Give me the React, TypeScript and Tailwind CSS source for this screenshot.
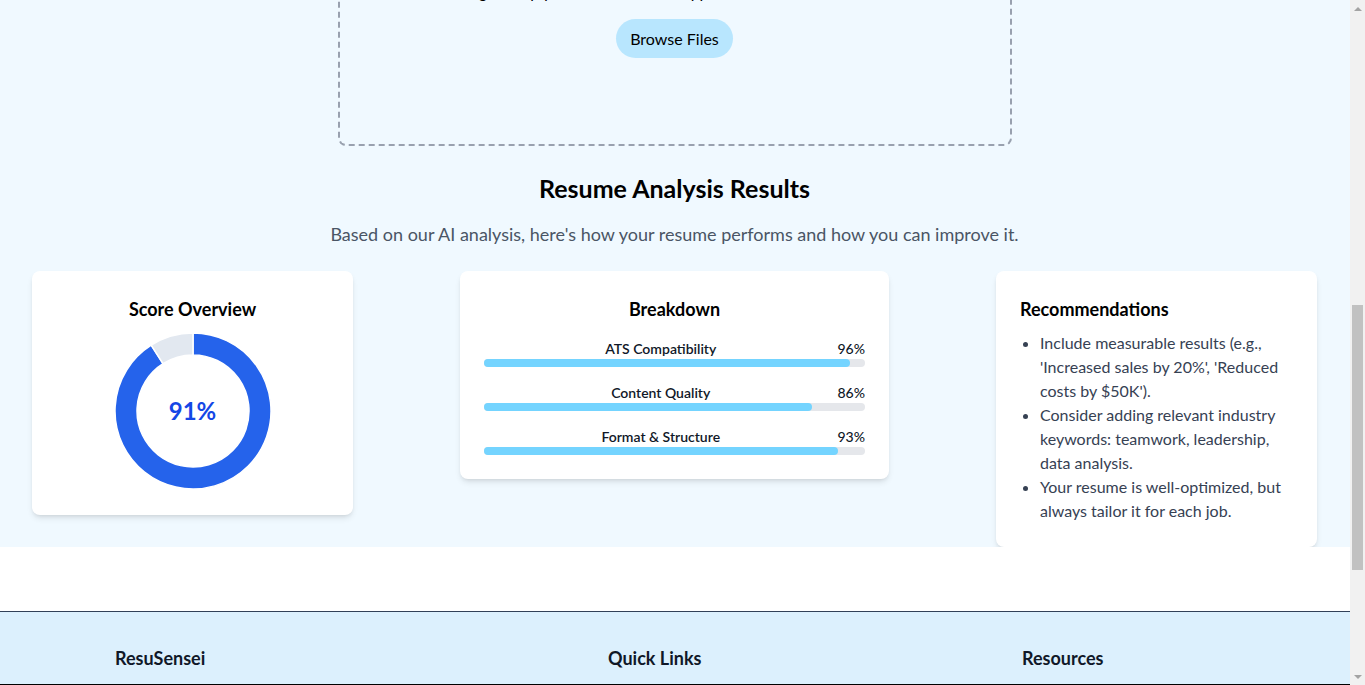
import React from "react"

const font = { fontFamily: '"Lato", "Open Sans", sans-serif' }

const breakdown = [
  { label: "ATS Compatibility", value: 96 },
  { label: "Content Quality", value: 86 },
  { label: "Format & Structure", value: 93 },
]

const recommendations = [
  "Include measurable results (e.g., 'Increased sales by 20%', 'Reduced costs by $50K').",
  "Consider adding relevant industry keywords: teamwork, leadership, data analysis.",
  "Your resume is well-optimized, but always tailor it for each job.",
]

function Donut() {
  return (
    <div className="relative w-[160px] h-[160px] mx-auto">
      <svg width="160" height="160" viewBox="0 0 160 160">
        <path
          d="M80 2 A78 78 0 1 1 38.21 14.14 L50 32.72 A56 56 0 1 0 80 24 Z"
          fill="#2563eb"
          stroke="#ffffff"
          strokeWidth="1.5"
        />
        <path
          d="M38.21 14.14 A78 78 0 0 1 80 2 L80 24 A56 56 0 0 0 50 32.72 Z"
          fill="#e2e8f0"
          stroke="#ffffff"
          strokeWidth="1.5"
        />
      </svg>
      <div className="absolute inset-0 flex items-center justify-center">
        <span className="text-2xl font-bold text-blue-700">91%</span>
      </div>
    </div>
  )
}

function Scrollbar() {
  return (
    <div className="w-[15px] shrink-0 bg-[#f1f1f1] flex flex-col items-center">
      <div className="h-[17px] flex items-center justify-center">
        <div className="w-0 h-0 border-l-[4px] border-r-[4px] border-b-[4px] border-l-transparent border-r-transparent border-b-[#a3a3a3]" />
      </div>
      <div className="h-[288px]" />
      <div className="h-[265px] w-[11px] bg-[#c1c1c1]" />
      <div className="flex-1" />
      <div className="h-[17px] flex items-center justify-center">
        <div className="w-0 h-0 border-l-[4px] border-r-[4px] border-t-[4px] border-l-transparent border-r-transparent border-t-[#a3a3a3]" />
      </div>
    </div>
  )
}

export default function App() {
  return (
    <div className="flex h-[685px] overflow-hidden bg-white" style={font}>
      <div className="flex-1 min-w-0 flex flex-col">
        {/* Upload + results */}
        <section className="bg-sky-50 pl-8 pr-[33px]">
          <div className="mx-auto w-[674px] mt-[-60px] pt-[38px] pb-[86px] border-2 border-dashed border-gray-400 rounded-lg flex flex-col items-center">
            <p className="text-base leading-6 text-black mb-[15px]">
              Drag &amp; drop your resume here. Supported formats: PDF, DOCX
            </p>
            <button className="h-[39px] bg-sky-200 text-black text-base leading-6 px-[14px] rounded-full">
              Browse Files
            </button>
          </div>

          <h2 className="mt-[26px] text-[25px] leading-8 font-bold text-black text-center">
            Resume Analysis Results
          </h2>
          <p className="mt-4 text-lg leading-7 text-gray-600 text-center">
            Based on our AI analysis, here's how your resume performs and how you can improve it.
          </p>

          <div className="mt-[23px] flex justify-between items-start">
            {/* Score */}
            <div className="w-[321px] bg-white rounded-lg shadow-md p-6">
              <h3 className="text-lg leading-7 font-bold text-black text-center mb-2">Score Overview</h3>
              <Donut />
            </div>

            {/* Breakdown */}
            <div className="w-[429px] bg-white rounded-lg shadow-md p-6">
              <h3 className="text-lg leading-7 font-bold text-black text-center mb-4">Breakdown</h3>
              <div className="flex flex-col gap-4">
                {breakdown.map((b) => (
                  <div key={b.label}>
                    <div className="flex text-sm leading-5 text-gray-900">
                      <span className="flex-1 text-center font-semibold">{b.label}</span>
                      <span className="font-medium">{b.value}%</span>
                    </div>
                    <div className="h-2 rounded-full bg-gray-200">
                      <div className="h-2 rounded-full bg-sky-300" style={{ width: `${b.value}%` }} />
                    </div>
                  </div>
                ))}
              </div>
            </div>

            {/* Recommendations */}
            <div className="w-[321px] bg-white rounded-lg shadow-md p-6">
              <h3 className="text-lg leading-7 font-bold text-black mb-2">Recommendations</h3>
              <ul className="list-disc pl-5 text-base leading-6 text-gray-700">
                {recommendations.map((r) => (
                  <li key={r}>{r}</li>
                ))}
              </ul>
            </div>
          </div>
        </section>

        <div className="h-16 bg-white" />

        {/* Footer */}
        <footer className="flex-1 bg-[#dcf0fd] border-t border-slate-700 pt-8">
          <div className="max-w-6xl mx-auto px-4 grid grid-cols-[493px_414px_1fr]">
            <h4 className="text-lg leading-7 font-bold text-gray-900">ResuSensei</h4>
            <h4 className="text-lg leading-7 font-bold text-gray-900">Quick Links</h4>
            <h4 className="text-lg leading-7 font-bold text-gray-900">Resources</h4>
          </div>
        </footer>
        <div className="h-px bg-black" />
      </div>
      <Scrollbar />
    </div>
  )
}
